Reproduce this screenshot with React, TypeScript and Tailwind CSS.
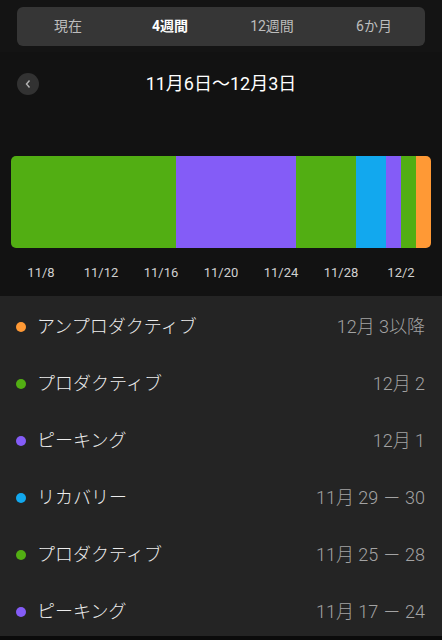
import React from "react";

const segs = [
  { w: 165, c: "bg-[#52ae13]" },
  { w: 120, c: "bg-[#845cf7]" },
  { w: 60, c: "bg-[#52ae13]" },
  { w: 30, c: "bg-[#12a8ee]" },
  { w: 15, c: "bg-[#845cf7]" },
  { w: 15, c: "bg-[#52ae13]" },
  { w: 15, c: "bg-[#ff9935]" },
];

const labels = ["11/8", "11/12", "11/16", "11/20", "11/24", "11/28", "12/2"];

const rows = [
  { dot: "bg-[#ff9935]", name: "アンプロダクティブ", date: "12月 3以降" },
  { dot: "bg-[#52ae13]", name: "プロダクティブ", date: "12月 2" },
  { dot: "bg-[#845cf7]", name: "ピーキング", date: "12月 1" },
  { dot: "bg-[#12a8ee]", name: "リカバリー", date: "11月 29 － 30" },
  { dot: "bg-[#52ae13]", name: "プロダクティブ", date: "11月 25 － 28" },
  { dot: "bg-[#845cf7]", name: "ピーキング", date: "11月 17 － 24" },
];

export default function App() {
  return (
    <div
      className="w-[442px] h-[640px] bg-[#0b0b0b] overflow-hidden flex flex-col"
      style={{ fontFamily: 'Roboto, "Noto Sans CJK JP", sans-serif' }}
    >
      <div className="bg-[#121212] flex flex-col">
        <div className="pt-[7px] px-[17px] pb-[6px] bg-[#141414]">
          <div className="h-[39px] rounded-[6px] bg-[#363636] grid grid-cols-4 items-center text-[14px]">
            <div className="text-center text-[#bdbdbd]">現在</div>
            <div className="text-center text-white font-bold">4週間</div>
            <div className="text-center text-[#bdbdbd]">12週間</div>
            <div className="text-center text-[#bdbdbd]">6か月</div>
          </div>
        </div>
        <div className="relative h-[57px] flex items-start justify-center">
          <div className="absolute left-[17px] top-[21px] w-[22px] h-[22px] rounded-full bg-[#323232] flex items-center justify-center">
            <svg width="8" height="10" viewBox="0 0 8 10">
              <path d="M5.5 1.5 L2.5 5 L5.5 8.5" stroke="#b5b5b5" strokeWidth="1.4" fill="none" />
            </svg>
          </div>
          <div className="text-[18px] leading-[24px] text-white mt-[20px]">11月6日〜12月3日</div>
        </div>
        <div className="px-[11px] pt-[47px]">
          <div className="h-[92px] rounded-[5px] overflow-hidden flex">
            {segs.map((s, i) => (
              <div key={i} className={s.c} style={{ width: s.w }} />
            ))}
          </div>
        </div>
        <div className="relative h-[48px]">
          {labels.map((l, i) => (
            <div
              key={l}
              className="absolute top-[15px] w-[60px] text-center text-[13px] text-[#d0d0d0]"
              style={{ left: 41 + i * 60 - 30 }}
            >
              {l}
            </div>
          ))}
        </div>
      </div>
      <div className="bg-[#242424] h-[340px] flex flex-col pt-[2px]">
        {rows.map((r, i) => (
          <div key={i} className="h-[57px] shrink-0 flex items-center pl-[16px] pr-[17px]">
            <div className={`w-[10px] h-[10px] rounded-full ${r.dot}`} />
            <div className="ml-[11px] text-[18px] font-light text-[#ececec]">{r.name}</div>
            <div className="ml-auto text-[18px] font-light text-[#a3a3a3]">{r.date}</div>
          </div>
        ))}
      </div>
    </div>
  );
}
